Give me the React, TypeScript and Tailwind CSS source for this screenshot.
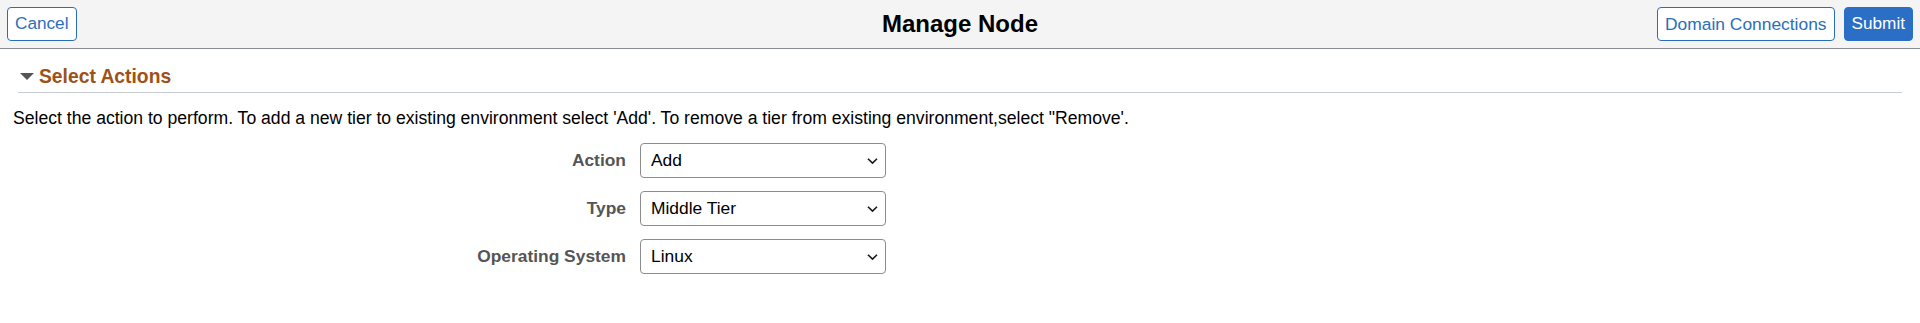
import { useState } from 'react'

const font = { fontFamily: '"Liberation Sans", Arial, sans-serif' }

type Field = { label: string; value: string; options: string[] }

const fields: Field[] = [
  { label: 'Action', value: 'Add', options: ['Add', 'Remove'] },
  { label: 'Type', value: 'Middle Tier', options: ['Middle Tier', 'Application Server', 'Process Scheduler'] },
  { label: 'Operating System', value: 'Linux', options: ['Linux', 'Windows'] },
]

function Chevron() {
  return (
    <svg width="11" height="7" viewBox="0 0 11 7" className="pointer-events-none absolute right-[8px] top-1/2 -translate-y-1/2">
      <path d="M1 1.2 L5.5 5.6 L10 1.2" fill="none" stroke="#1a1a1a" strokeWidth="1.6" />
    </svg>
  )
}

function SelectField({ field }: { field: Field }) {
  const [value, setValue] = useState(field.value)
  return (
    <>
      <label className="flex h-[35px] items-center justify-end text-[17.4px] font-bold text-[#555555]">
        {field.label}
      </label>
      <div className="relative h-[35px] w-[246px]">
        <select
          value={value}
          onChange={(e) => setValue(e.target.value)}
          className="h-full w-full appearance-none rounded-[4px] border border-[#8c8c8c] bg-white pl-[10px] pr-8 text-[17.4px] text-black outline-none"
          style={font}
        >
          {field.options.map((o) => (
            <option key={o}>{o}</option>
          ))}
        </select>
        <Chevron />
      </div>
    </>
  )
}

export default function App() {
  return (
    <div className="min-h-[323px] w-full bg-white" style={font}>
      {/* Header bar */}
      <div className="flex h-[49px] items-center justify-between border-b border-[#878c94] bg-[#f4f4f4] px-[7px]">
        <div className="flex-1">
          <button className="h-[34px] rounded-[4px] border border-[#2a6ebb] bg-white px-[7px] text-[17.2px] text-[#2a6ebb]">
            Cancel
          </button>
        </div>
        <h1 className="text-[24px] font-bold text-black">Manage Node</h1>
        <div className="flex flex-1 justify-end gap-[9px]">
          <button className="h-[34px] rounded-[4px] border border-[#2a6ebb] bg-white px-[7px] text-[17.4px] text-[#2a6ebb]">
            Domain Connections
          </button>
          <button className="h-[34px] rounded-[4px] border border-[#2a6ec6] bg-[#2a6ec6] px-[7px] text-[17.2px] text-white">
            Submit
          </button>
        </div>
      </div>

      {/* Section header */}
      <div className="mx-[18px] mt-[17px] flex items-center gap-[5px] border-b border-[#c8ccd6] pb-[4px]">
        <svg width="14" height="8" viewBox="0 0 14 8" className="ml-[2px]">
          <path d="M0 0 H14 L7 7 Z" fill="#555555" />
        </svg>
        <span className="text-[19.3px] font-bold leading-[22px] text-[#9e5216]">Select Actions</span>
      </div>

      <p className="mt-[15px] pl-[13px] text-[17.6px] leading-[20px] text-black">
        Select the action to perform. To add a new tier to existing environment select 'Add'. To remove a tier from
        existing environment,select "Remove'.
      </p>

      {/* Form */}
      <div className="mt-[15px] grid grid-cols-[626px_246px] gap-x-[14px] gap-y-[13px]">
        {fields.map((f) => (
          <SelectField key={f.label} field={f} />
        ))}
      </div>
    </div>
  )
}
